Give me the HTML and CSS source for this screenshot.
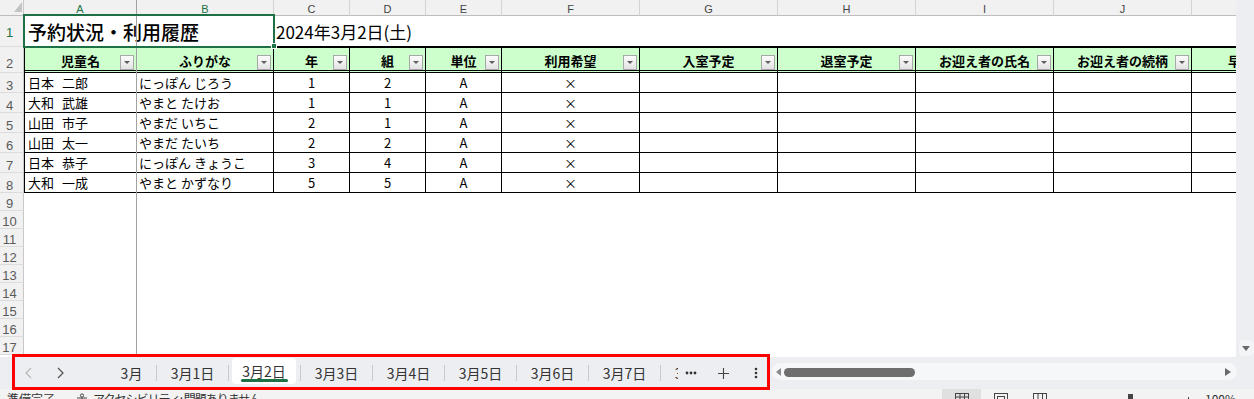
FILE: index.html
```html
<!DOCTYPE html>
<html lang="ja">
<head>
    <meta charset="UTF-8">
    <meta name="viewport" content="width=device-width, initial-scale=1.0">
    <title>予約状況・利用履歴</title>
    <link rel="stylesheet" href="styles.css">
</head>
<body>
<div class="app">
    <div class="main">
        <div class="sheet">
            <div class="grid">
                <div class="corner"><svg width="8" height="10" viewBox="0 0 8 10"><polygon points="8,0 8,10 0,10" fill="#c4c4c4"/></svg></div>
                <div class="col-head sel">A</div>
                <div class="col-head sel">B</div>
                <div class="col-head">C</div>
                <div class="col-head">D</div>
                <div class="col-head">E</div>
                <div class="col-head">F</div>
                <div class="col-head">G</div>
                <div class="col-head">H</div>
                <div class="col-head">I</div>
                <div class="col-head">J</div>
                <div class="col-head">K</div>

                <!-- row 1 -->
                <div class="row-head sel r1h">1</div>
                <div class="title">予約状況・利用履歴</div>
                <div class="r1 date">2024年3月2日(土)</div>
                <div class="r1"></div>
                <div class="r1"></div>
                <div class="r1"></div>
                <div class="r1"></div>
                <div class="r1"></div>
                <div class="r1"></div>
                <div class="r1"></div>
                <div class="r1"></div>

                <!-- row 2: table header -->
                <div class="row-head r2h">2</div>
                <div class="th first">児童名<span class="filter"></span></div>
                <div class="th">ふりがな<span class="filter"></span></div>
                <div class="th">年<span class="filter"></span></div>
                <div class="th">組<span class="filter"></span></div>
                <div class="th">単位<span class="filter"></span></div>
                <div class="th">利用希望<span class="filter"></span></div>
                <div class="th">入室予定<span class="filter"></span></div>
                <div class="th">退室予定<span class="filter"></span></div>
                <div class="th">お迎え者の氏名<span class="filter"></span></div>
                <div class="th">お迎え者の続柄<span class="filter"></span></div>
                <div class="th">早退の有無<span class="filter"></span></div>

                <!-- rows 3-8 -->
                <div class="row-head">3</div>
                <div class="td first name">日本 二郎</div>
                <div class="td kana">にっぽん じろう</div>
                <div class="td mid">1</div>
                <div class="td mid">2</div>
                <div class="td mid">A</div>
                <div class="td mid">×</div>
                <div class="td"></div><div class="td"></div><div class="td"></div><div class="td"></div><div class="td"></div>

                <div class="row-head">4</div>
                <div class="td first name">大和 武雄</div>
                <div class="td kana">やまと たけお</div>
                <div class="td mid">1</div>
                <div class="td mid">1</div>
                <div class="td mid">A</div>
                <div class="td mid">×</div>
                <div class="td"></div><div class="td"></div><div class="td"></div><div class="td"></div><div class="td"></div>

                <div class="row-head">5</div>
                <div class="td first name">山田 市子</div>
                <div class="td kana">やまだ いちこ</div>
                <div class="td mid">2</div>
                <div class="td mid">1</div>
                <div class="td mid">A</div>
                <div class="td mid">×</div>
                <div class="td"></div><div class="td"></div><div class="td"></div><div class="td"></div><div class="td"></div>

                <div class="row-head">6</div>
                <div class="td first name">山田 太一</div>
                <div class="td kana">やまだ たいち</div>
                <div class="td mid">2</div>
                <div class="td mid">2</div>
                <div class="td mid">A</div>
                <div class="td mid">×</div>
                <div class="td"></div><div class="td"></div><div class="td"></div><div class="td"></div><div class="td"></div>

                <div class="row-head">7</div>
                <div class="td first name">日本 恭子</div>
                <div class="td kana">にっぽん きょうこ</div>
                <div class="td mid">3</div>
                <div class="td mid">4</div>
                <div class="td mid">A</div>
                <div class="td mid">×</div>
                <div class="td"></div><div class="td"></div><div class="td"></div><div class="td"></div><div class="td"></div>

                <div class="row-head">8</div>
                <div class="td first name">大和 一成</div>
                <div class="td kana">やまと かずなり</div>
                <div class="td mid">5</div>
                <div class="td mid">5</div>
                <div class="td mid">A</div>
                <div class="td mid">×</div>
                <div class="td"></div><div class="td"></div><div class="td"></div><div class="td"></div><div class="td"></div>

                <!-- empty rows -->
                <div class="row-head">9</div><div class="blank"></div>
                <div class="row-head">10</div><div class="blank"></div>
                <div class="row-head">11</div><div class="blank"></div>
                <div class="row-head">12</div><div class="blank"></div>
                <div class="row-head">13</div><div class="blank"></div>
                <div class="row-head">14</div><div class="blank"></div>
                <div class="row-head">15</div><div class="blank"></div>
                <div class="row-head">16</div><div class="blank"></div>
                <div class="row-head">17</div><div class="blank"></div>
            </div>

            <div class="freeze"></div>
            <div class="selection"><span class="handle"></span></div>
        </div>
        <div class="vscroll">
            <span class="vbtn"><span class="down"></span></span>
        </div>
    </div>

    <div class="bottom">
        <div class="tabbar">
            <span class="nav first-nav"><svg width="7" height="12" viewBox="0 0 7 12"><polyline points="6,1 1,6 6,11" fill="none" stroke="#b8b8b8" stroke-width="1.2"/></svg></span>
            <span class="nav"><svg width="7" height="12" viewBox="0 0 7 12"><polyline points="1,1 6,6 1,11" fill="none" stroke="#505050" stroke-width="1.2"/></svg></span>
            <div class="tabs">
                <span class="tab short">3月</span><i class="sep"></i>
                <span class="tab">3月1日</span><i class="sep"></i>
                <span class="tab active">3月2日</span><i class="sep"></i>
                <span class="tab">3月3日</span><i class="sep"></i>
                <span class="tab">3月4日</span><i class="sep"></i>
                <span class="tab">3月5日</span><i class="sep"></i>
                <span class="tab">3月6日</span><i class="sep"></i>
                <span class="tab">3月7日</span><i class="sep"></i>
                <span class="tab">3月8日</span>
            </div>
            <span class="tab-btn more"><svg width="12" height="4" viewBox="0 0 12 4"><circle cx="2" cy="2" r="1.4" fill="#333"/><circle cx="6" cy="2" r="1.4" fill="#333"/><circle cx="10" cy="2" r="1.4" fill="#333"/></svg></span>
            <span class="tab-btn add"><svg width="11" height="11" viewBox="0 0 11 11"><path d="M5.5 0v11M0 5.5h11" stroke="#444" stroke-width="1.1"/></svg></span>
            <span class="tab-btn menu"><svg width="4" height="12" viewBox="0 0 4 12"><circle cx="2" cy="2" r="1.3" fill="#333"/><circle cx="2" cy="6" r="1.3" fill="#333"/><circle cx="2" cy="10" r="1.3" fill="#333"/></svg></span>
        </div>
        <div class="hscroll">
            <span class="arrow-left"></span>
            <span class="thumb"></span>
            <span class="arrow-right"></span>
        </div>
    </div>

    <div class="status">
        <span class="ready">準備完了</span>
        <span class="acc">
            <svg width="12" height="12" viewBox="0 0 12 12"><circle cx="6" cy="2.5" r="1.6" fill="none" stroke="#444" stroke-width="1"/><path d="M1 5h10M6 5v6M3 11l3-4 3 4" fill="none" stroke="#444" stroke-width="1"/></svg>
            アクセシビリティ: 問題ありません
        </span>
        <span class="views">
            <span class="view on"><svg width="14" height="12" viewBox="0 0 14 12"><rect x="0.5" y="0.5" width="13" height="11" fill="none" stroke="#444"/><path d="M0.5 4h13M0.5 8h13M5 0.5v11M9.5 0.5v11" stroke="#444"/></svg></span>
            <span class="view"><svg width="14" height="12" viewBox="0 0 14 12"><rect x="0.5" y="0.5" width="13" height="11" fill="none" stroke="#444"/><rect x="3.5" y="3.5" width="7" height="8" fill="none" stroke="#444"/></svg></span>
            <span class="view"><svg width="14" height="12" viewBox="0 0 14 12"><rect x="0.5" y="0.5" width="13" height="11" fill="none" stroke="#444"/><path d="M5 0.5v11M9.5 0.5v11" stroke="#444"/></svg></span>
        </span>
        <span class="zoom">
            <span class="minus"></span>
            <span class="slider"><span class="knob"></span></span>
            <span class="plus"></span>
            <span class="pct">100%</span>
        </span>
    </div>

    <div class="callout"></div>
</div>
</body>
</html>
```

FILE: styles.css
```css
* {
    box-sizing: border-box;
}
body {
    margin: 0;
    font-family: "Noto Sans CJK JP", "Liberation Sans", sans-serif;
    color: #000;
    background-color: #eceef1;
}
.app {
    position: relative;
    width: 1254px;
    height: 399px;
    overflow: hidden;
    background-color: #eceef1;
}

/* sheet area */
.main {
    display: flex;
    height: 357px;
}
.sheet {
    position: relative;
    width: 1236px;
    height: 357px;
    overflow: hidden;
    background-color: #fff;
}
.grid {
    display: grid;
    grid-template-columns: 24px 113px 137px 76px 76px 76px 138px 138px 138px 138px 138px 138px;
    grid-template-rows: 16px 31px 26px repeat(6, 20px) repeat(9, 18px);
    width: max-content;
}
.corner {
    display: flex;
    justify-content: flex-end;
    align-items: flex-end;
    padding: 0 1px 3px 0;
    background-color: #f1f1f1;
    border-right: 1px solid #c8c8c8;
    border-bottom: 1px solid #bdbdbd;
}
.col-head {
    padding-top: 3px;
    font: 11px/12px "Liberation Sans", sans-serif;
    color: #444;
    text-align: center;
    background-color: #f1f1f1;
    border-right: 1px solid #d4d4d4;
    border-bottom: 1px solid #bdbdbd;
}
.col-head.sel {
    color: #1e7145;
}
.row-head {
    display: flex;
    justify-content: center;
    align-items: flex-end;
    padding-right: 4px;
    font: 13px/13px "Liberation Sans", sans-serif;
    color: #5a5a5a;
    background-color: #f1f1f1;
    border-right: 1px solid #c8c8c8;
    border-bottom: 1px solid #dcdcdc;
}
.row-head.sel {
    color: #1e7145;
}
.row-head.r1h {
    padding-bottom: 7px;
}
.row-head.r2h {
    padding-bottom: 2px;
}

/* row 1 */
.title {
    grid-column: span 2;
    display: flex;
    align-items: center;
    padding-left: 4px;
    font-size: 19px;
    font-weight: 500;
    white-space: nowrap;
}
.r1 {
    border-bottom: 1px solid #000;
}
.date {
    display: flex;
    align-items: center;
    padding-left: 2px;
    font-size: 17px;
    white-space: nowrap;
}

/* table */
.th {
    position: relative;
    display: flex;
    justify-content: center;
    align-items: center;
    padding-top: 3px;
    font-size: 13px;
    font-weight: 700;
    white-space: nowrap;
    background-color: #ccffcc;
    border-top: 1px solid #000;
    border-right: 1px solid #000;
    border-bottom: 3px double #000;
}
.filter {
    position: absolute;
    right: 2px;
    top: 7px;
    width: 14px;
    height: 15px;
    border: 1px solid #a8a8a8;
    background: linear-gradient(#fcfcfc, #e2e2e2);
}
.filter::after {
    content: "";
    position: absolute;
    left: 3px;
    top: 5px;
    border-left: 3px solid transparent;
    border-right: 3px solid transparent;
    border-top: 3px solid #5c5c5c;
}
.td {
    display: flex;
    align-items: center;
    font-size: 13px;
    white-space: nowrap;
    border-right: 1px solid #000;
    border-bottom: 1px solid #000;
}
.first {
    border-left: 1px solid #000;
}
.name {
    padding-left: 3px;
    word-spacing: 5px;
}
.kana {
    padding-left: 2px;
}
.mid {
    justify-content: center;
}
.blank {
    grid-column: 2 / -1;
}

/* overlays on the grid */
.freeze {
    position: absolute;
    left: 136px;
    top: 0;
    width: 1px;
    height: 100%;
    background-color: #a2a2a2;
}
.selection {
    position: absolute;
    left: 23px;
    top: 14px;
    width: 252px;
    height: 34px;
    border: 2px solid #1e7145;
}
.handle {
    position: absolute;
    right: -4px;
    bottom: -3px;
    width: 6px;
    height: 6px;
    background-color: #1e7145;
    border: 1px solid #fff;
}

/* vertical scrollbar */
.vscroll {
    display: flex;
    flex-direction: column;
    justify-content: flex-end;
    align-items: center;
    width: 18px;
    padding: 0 0 1px 2px;
}
.vbtn {
    display: flex;
    justify-content: center;
    align-items: center;
    width: 15px;
    height: 16px;
    border-radius: 5px;
    background-color: #f3f4f6;
}
.down {
    border-left: 4px solid transparent;
    border-right: 4px solid transparent;
    border-top: 5px solid #6a6a6a;
}

/* sheet tabs */
.bottom {
    display: flex;
    height: 32px;
}
.tabbar {
    display: flex;
    align-items: center;
    flex: 0 0 772px;
    height: 32px;
}
.nav {
    display: flex;
    justify-content: center;
    flex: 0 0 32px;
}
.first-nav {
    margin-left: 12px;
}
.tabs {
    display: flex;
    align-items: center;
    flex: 0 0 571px;
    height: 32px;
    margin-left: 31px;
    overflow: hidden;
}
.tab {
    display: flex;
    justify-content: center;
    align-items: center;
    flex: 0 0 71px;
    height: 32px;
    font-size: 14px;
    color: #333;
    white-space: nowrap;
}
.tab.short {
    flex-basis: 49px;
}
.tab.active {
    position: relative;
    flex-basis: 64px;
    align-self: flex-start;
    height: 26px;
    margin: 1px 4px 0 3px;
    background-color: #fff;
    border-radius: 4px;
}
.tab.active::after {
    content: "";
    position: absolute;
    left: 9px;
    width: 47px;
    bottom: 2px;
    height: 3px;
    border-radius: 2px;
    background-color: #1e7145;
}
.sep {
    flex: 0 0 1px;
    height: 16px;
    background-color: #c8cace;
}
.tab-btn {
    display: flex;
    justify-content: center;
    align-items: center;
    height: 32px;
}
.tab-btn.more {
    flex: 0 0 26px;
}
.tab-btn.add {
    flex: 0 0 38px;
}
.tab-btn.menu {
    flex: 0 0 28px;
}

/* horizontal scrollbar */
.hscroll {
    display: flex;
    align-items: center;
    flex: 0 0 465px;
    height: 17px;
    margin-top: 6px;
    padding: 0 6px 0 4px;
    border-radius: 9px;
    background-color: #f6f7f9;
}
.arrow-left {
    border-top: 4px solid transparent;
    border-bottom: 4px solid transparent;
    border-right: 5px solid #8a8a8a;
}
.thumb {
    width: 131px;
    height: 9px;
    margin-left: 3px;
    margin-top: 2px;
    border-radius: 5px;
    background-color: #6e6e6e;
}
.arrow-right {
    margin-left: auto;
    border-top: 4px solid transparent;
    border-bottom: 4px solid transparent;
    border-left: 6px solid #6a6a6a;
}

/* status bar */
.status {
    display: flex;
    align-items: flex-start;
    height: 24px;
    padding-top: 2px;
    font-size: 12px;
    line-height: 16px;
    color: #333;
    background-color: #f3f3f3;
}
.ready {
    margin-left: 7px;
    width: 69px;
}
.acc {
    display: flex;
    align-items: center;
    gap: 5px;
    letter-spacing: -1px;
}
.views {
    display: flex;
    margin-left: auto;
    height: 22px;
    margin-top: -2px;
}
.view {
    display: flex;
    justify-content: center;
    width: 39px;
    padding-top: 4px;
}
.view.on {
    background-color: #e0e0e0;
}
.zoom {
    display: flex;
    align-items: flex-start;
    width: 195px;
}
.minus {
    width: 20px;
}
.slider {
    position: relative;
    width: 102px;
    height: 12px;
}
.knob {
    position: absolute;
    left: 49px;
    top: 3px;
    width: 5px;
    height: 10px;
    background-color: #444;
}
.plus {
    width: 14px;
    height: 12px;
    margin-top: 6px;
    border-left: 1px solid #444;
    margin-left: 7px;
}
.pct {
    margin-left: 3px;
}

/* red annotation frame */
.callout {
    position: absolute;
    left: 12px;
    top: 354px;
    width: 758px;
    height: 36px;
    border: 3px solid #ff0000;
}
```
